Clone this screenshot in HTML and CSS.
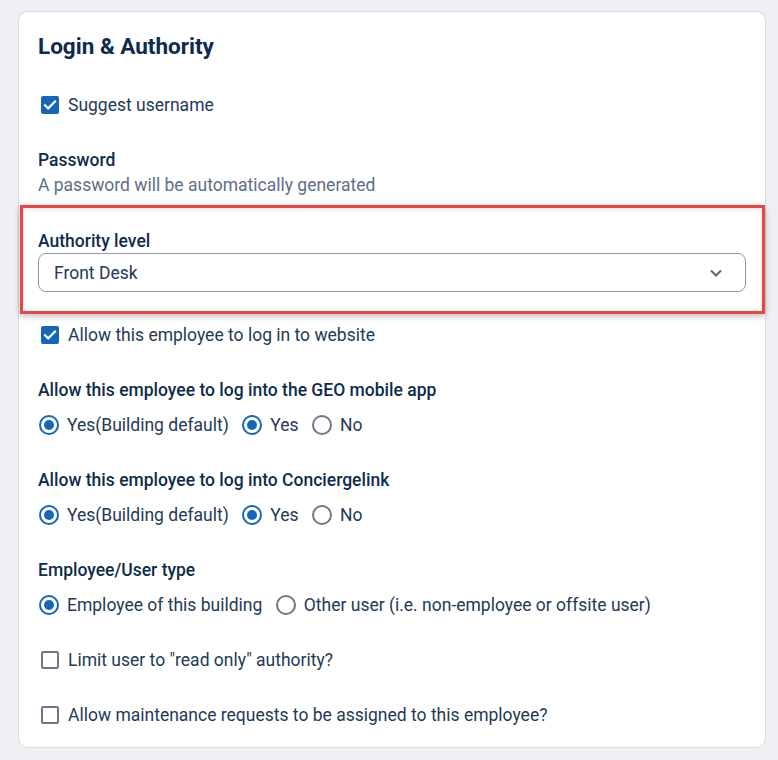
FILE: index.html
```html
<!DOCTYPE html>
<html>
<head>
<meta charset="utf-8">
<link rel="stylesheet" href="styles.css">
</head>
<body>
<div class="card">
  <h2 class="title">Login &amp; Authority</h2>

  <label class="check row-suggest">
    <span class="box checked"><svg viewBox="0 0 18 18" width="18" height="18"><path d="M4 9.2l3.2 3.2L14 5.6" fill="none" stroke="#fff" stroke-width="2.2" stroke-linecap="square"/></svg></span>
    <span class="txt">Suggest username</span>
  </label>

  <div class="field-label row-pass">Password</div>
  <div class="sub">A password will be automatically generated</div>

  <div class="highlight">
    <div class="field-label">Authority level</div>
    <div class="select">
      <span>Front Desk</span>
      <svg class="chev" viewBox="0 0 14 10" width="14" height="10"><path d="M2 2.5l5 5 5-5" fill="none" stroke="#56677a" stroke-width="2"/></svg>
    </div>
  </div>

  <label class="check row-web">
    <span class="box checked"><svg viewBox="0 0 18 18" width="18" height="18"><path d="M4 9.2l3.2 3.2L14 5.6" fill="none" stroke="#fff" stroke-width="2.2" stroke-linecap="square"/></svg></span>
    <span class="txt">Allow this employee to log in to website</span>
  </label>

  <div class="field-label gap-lg">Allow this employee to log into the GEO mobile app</div>
  <div class="radios">
    <span class="radio on"></span><span class="txt">Yes(Building default)</span>
    <span class="radio on"></span><span class="txt">Yes</span>
    <span class="radio"></span><span class="txt">No</span>
  </div>

  <div class="field-label gap-lg">Allow this employee to log into Conciergelink</div>
  <div class="radios">
    <span class="radio on"></span><span class="txt">Yes(Building default)</span>
    <span class="radio on"></span><span class="txt">Yes</span>
    <span class="radio"></span><span class="txt">No</span>
  </div>

  <div class="field-label gap-lg">Employee/User type</div>
  <div class="radios">
    <span class="radio on"></span><span class="txt">Employee of this building</span>
    <span class="radio"></span><span class="txt">Other user (i.e. non-employee or offsite user)</span>
  </div>

  <label class="check gap-lg">
    <span class="box"></span>
    <span class="txt">Limit user to "read only" authority?</span>
  </label>

  <label class="check gap-lg">
    <span class="box"></span>
    <span class="txt">Allow maintenance requests to be assigned to this employee?</span>
  </label>
</div>
</body>
</html>
```
FILE: styles.css
```css
* { box-sizing: border-box; }
html, body { margin: 0; padding: 0; }
body {
  background: #eef0f4;
  font-family: Roboto, "Liberation Sans", sans-serif;
  font-size: 17.5px;
  color: #233a57;
}
.card {
  margin: 11px 12px 0 18px;
  width: 748px;
  background: #fff;
  border: 1px solid #d8dce2;
  border-radius: 10px;
  padding: 22px 19px 22px 19px;
  display: flex;
  flex-direction: column;
}
.title {
  margin: 0;
  font-size: 22.5px;
  line-height: 24px;
  font-weight: 700;
  color: #0d2b4c;
}
.check {
  display: flex;
  align-items: center;
  height: 20px;
  line-height: 20px;
}
.row-suggest { margin-top: 37px; }
.row-pass { margin-top: 35px; }
.row-web { margin-top: 11px; }
.gap-lg { margin-top: 35px; }
.box {
  width: 18px;
  height: 18px;
  margin-left: 3px;
  margin-right: 9px;
  border: 2px solid #6d7886;
  border-radius: 2px;
  display: flex;
  align-items: center;
  justify-content: center;
  flex: none;
}
.box.checked {
  background: #1565b8;
  border: none;
}
.txt { color: #233a57; white-space: nowrap; }
.field-label {
  font-weight: 500;
  line-height: 20px;
  color: #0f2c4c;
}
.sub {
  margin-top: 5px;
  line-height: 20px;
  color: #5b6f87;
}
.highlight {
  margin: 10px -19px 0 -18px;
  border: 3px solid #ef4444;
  padding: 23px 16px 19px 15px;
  box-shadow: 0 2px 6px rgba(0, 0, 0, 0.28), inset 0 1px 4px rgba(0, 0, 0, 0.12);
}
.select {
  margin-top: 2px;
  height: 39px;
  border: 1px solid #8b9aac;
  border-radius: 8px;
  display: flex;
  align-items: center;
  justify-content: space-between;
  padding: 0 22px 0 15px;
  color: #233a57;
}
.chev { display: block; }
.radios {
  margin-top: 15px;
  display: flex;
  align-items: center;
  height: 20px;
  line-height: 20px;
}
.radio {
  width: 20px;
  height: 20px;
  border-radius: 50%;
  border: 2px solid #6d7886;
  margin-left: 1px;
  margin-right: 8px;
  flex: none;
  display: flex;
  align-items: center;
  justify-content: center;
}
.radios .txt { margin-right: 12.5px; }
.radio.on { border-color: #1565b8; }
.radio.on::after {
  content: "";
  width: 10px;
  height: 10px;
  border-radius: 50%;
  background: #1565b8;
}
```
